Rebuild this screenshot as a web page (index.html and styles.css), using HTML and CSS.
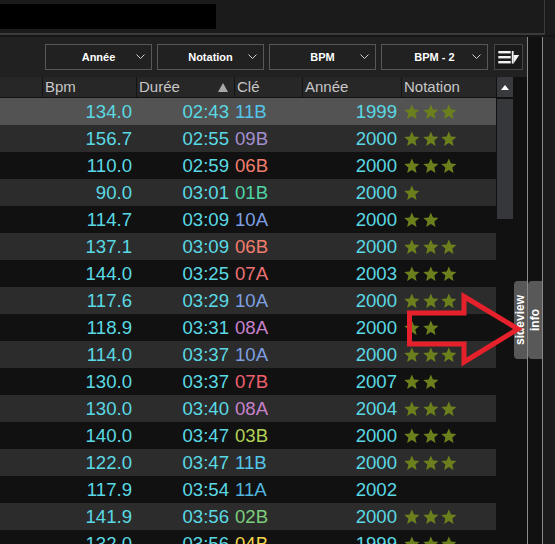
FILE: index.html
```html
<!DOCTYPE html>
<html lang="fr">
<head>
<meta charset="utf-8">
<title>Liste</title>
<link rel="stylesheet" href="styles.css">
</head>
<body>
<svg class="defs" width="0" height="0" aria-hidden="true">
  <defs>
    <symbol id="star" viewBox="0 0 24 24">
      <polygon points="12,0.6 15.3,8.3 23.6,9 17.3,14.5 19.2,22.8 12,18.5 4.8,22.8 6.7,14.5 0.4,9 8.7,8.3"/>
    </symbol>
    <symbol id="chev" viewBox="0 0 9 5">
      <polyline points="0.5,0.5 4.5,4.5 8.5,0.5" fill="none" stroke="#cfcfcf" stroke-width="1"/>
    </symbol>
  </defs>
</svg>

<div class="top"><div class="blackout"></div></div>
<div class="spacer"></div>

<div class="main">
  <div class="panel">
    <div class="toolbar">
      <div class="dd"><span class="dd-label">Année</span><svg class="chev"><use href="#chev"/></svg></div>
      <div class="dd"><span class="dd-label">Notation</span><svg class="chev"><use href="#chev"/></svg></div>
      <div class="dd"><span class="dd-label">BPM</span><svg class="chev"><use href="#chev"/></svg></div>
      <div class="dd"><span class="dd-label">BPM - 2</span><svg class="chev"><use href="#chev"/></svg></div>
      <div class="sortbtn">
        <svg width="27" height="24" viewBox="0 0 27 24">
          <rect x="3.3" y="6" width="12.4" height="2.4" fill="#f2f2f2"/>
          <rect x="3.3" y="11" width="12.4" height="2.4" fill="#f2f2f2"/>
          <rect x="3.3" y="16" width="12.4" height="2.4" fill="#f2f2f2"/>
          <rect x="16.8" y="6" width="1.8" height="12.6" fill="#f2f2f2"/>
          <polygon points="18.6,10 24.2,10 18.6,18.6" fill="#f2f2f2"/>
        </svg>
      </div>
    </div>

    <div class="tablewrap">
      <div class="table">
        <div class="thead">
          <div class="th"></div>
          <div class="th">Bpm</div>
          <div class="th sorted">Durée<span class="sortarrow"></span></div>
          <div class="th">Clé</div>
          <div class="th">Année</div>
          <div class="th">Notation</div>
        </div>

        <div class="row sel"><div></div><div class="num">134.0</div><div class="dur">02:43</div><div class="key k11b">11B</div><div class="yr">1999</div><div class="stars"><svg><use href="#star"/></svg><svg><use href="#star"/></svg><svg><use href="#star"/></svg></div></div>
        <div class="row alt"><div></div><div class="num">156.7</div><div class="dur">02:55</div><div class="key k09b">09B</div><div class="yr">2000</div><div class="stars"><svg><use href="#star"/></svg><svg><use href="#star"/></svg><svg><use href="#star"/></svg></div></div>
        <div class="row"><div></div><div class="num">110.0</div><div class="dur">02:59</div><div class="key k06b">06B</div><div class="yr">2000</div><div class="stars"><svg><use href="#star"/></svg><svg><use href="#star"/></svg><svg><use href="#star"/></svg></div></div>
        <div class="row alt"><div></div><div class="num">90.0</div><div class="dur">03:01</div><div class="key k01b">01B</div><div class="yr">2000</div><div class="stars"><svg><use href="#star"/></svg></div></div>
        <div class="row"><div></div><div class="num">114.7</div><div class="dur">03:09</div><div class="key k10a">10A</div><div class="yr">2000</div><div class="stars"><svg><use href="#star"/></svg><svg><use href="#star"/></svg></div></div>
        <div class="row alt"><div></div><div class="num">137.1</div><div class="dur">03:09</div><div class="key k06b">06B</div><div class="yr">2000</div><div class="stars"><svg><use href="#star"/></svg><svg><use href="#star"/></svg><svg><use href="#star"/></svg></div></div>
        <div class="row"><div></div><div class="num">144.0</div><div class="dur">03:25</div><div class="key k07a">07A</div><div class="yr">2003</div><div class="stars"><svg><use href="#star"/></svg><svg><use href="#star"/></svg><svg><use href="#star"/></svg></div></div>
        <div class="row alt"><div></div><div class="num">117.6</div><div class="dur">03:29</div><div class="key k10a">10A</div><div class="yr">2000</div><div class="stars"><svg><use href="#star"/></svg><svg><use href="#star"/></svg><svg><use href="#star"/></svg></div></div>
        <div class="row"><div></div><div class="num">118.9</div><div class="dur">03:31</div><div class="key k08a">08A</div><div class="yr">2000</div><div class="stars"><svg><use href="#star"/></svg><svg><use href="#star"/></svg></div></div>
        <div class="row alt"><div></div><div class="num">114.0</div><div class="dur">03:37</div><div class="key k10a">10A</div><div class="yr">2000</div><div class="stars"><svg><use href="#star"/></svg><svg><use href="#star"/></svg><svg><use href="#star"/></svg></div></div>
        <div class="row"><div></div><div class="num">130.0</div><div class="dur">03:37</div><div class="key k07b">07B</div><div class="yr">2007</div><div class="stars"><svg><use href="#star"/></svg><svg><use href="#star"/></svg></div></div>
        <div class="row alt"><div></div><div class="num">130.0</div><div class="dur">03:40</div><div class="key k08a">08A</div><div class="yr">2004</div><div class="stars"><svg><use href="#star"/></svg><svg><use href="#star"/></svg><svg><use href="#star"/></svg></div></div>
        <div class="row"><div></div><div class="num">140.0</div><div class="dur">03:47</div><div class="key k03b">03B</div><div class="yr">2000</div><div class="stars"><svg><use href="#star"/></svg><svg><use href="#star"/></svg><svg><use href="#star"/></svg></div></div>
        <div class="row alt"><div></div><div class="num">122.0</div><div class="dur">03:47</div><div class="key k11b">11B</div><div class="yr">2000</div><div class="stars"><svg><use href="#star"/></svg><svg><use href="#star"/></svg><svg><use href="#star"/></svg></div></div>
        <div class="row"><div></div><div class="num">117.9</div><div class="dur">03:54</div><div class="key k11a">11A</div><div class="yr">2002</div><div class="stars"></div></div>
        <div class="row alt"><div></div><div class="num">141.9</div><div class="dur">03:56</div><div class="key k02b">02B</div><div class="yr">2000</div><div class="stars"><svg><use href="#star"/></svg><svg><use href="#star"/></svg><svg><use href="#star"/></svg></div></div>
        <div class="row"><div></div><div class="num">132.0</div><div class="dur">03:56</div><div class="key k04b">04B</div><div class="yr">1999</div><div class="stars"><svg><use href="#star"/></svg><svg><use href="#star"/></svg><svg><use href="#star"/></svg></div></div>
      </div>

      <div class="vscroll">
        <div class="vs-up"><span class="vs-tri"></span></div>
        <div class="vs-thumb"></div>
      </div>
    </div>
  </div>
  <div class="rail"></div>
  <div class="rest"></div>
</div>

<div class="tab tab-side"><span>sideview</span></div>
<div class="tab tab-info"><span>info</span></div>

<svg class="arrow" width="555" height="544" viewBox="0 0 555 544" aria-hidden="true">
  <polygon points="409.5,313 464,313 464,296.5 518,329 464,362 464,344 409.5,344" fill="none" stroke="#e5222b" stroke-width="5" stroke-linejoin="miter"/>
</svg>
</body>
</html>
```

FILE: styles.css
```css
* { box-sizing: border-box; }

html, body {
  margin: 0;
  padding: 0;
}

body {
  width: 555px;
  height: 544px;
  overflow: hidden;
  background: #1b1b1b;
  font-family: "Liberation Sans", Arial, sans-serif;
  position: relative;
}

.defs { position: absolute; width: 0; height: 0; }

.top {
  width: 545px;
  height: 35px;
  background: #1b1b1b;
  border-right: 1px solid #3a3a3a;
  border-bottom: 2px solid #3a3a3a;
  padding-top: 4px;
}

.blackout {
  width: 216px;
  height: 25px;
  background: #000;
}

.spacer {
  height: 2px;
  background: #161616;
}

.main {
  display: flex;
  height: 507px;
}

.panel {
  width: 527px;
  background: #111;
  display: flex;
  flex-direction: column;
}

.toolbar {
  height: 40px;
  background: #212121;
  display: flex;
  align-items: flex-start;
  padding: 7px 0 0 45px;
  gap: 5px;
}

.dd {
  width: 107px;
  height: 26px;
  border: 1px solid #585858;
  display: grid;
  grid-template-columns: 1fr auto 1fr;
  align-items: center;
}

.dd-label {
  grid-column: 2;
  color: #fff;
  font-weight: bold;
  font-size: 11px;
}

.chev {
  grid-column: 3;
  justify-self: end;
  width: 9px;
  height: 5px;
  margin-right: 6px;
  margin-top: -2px;
}

.sortbtn {
  width: 29px;
  height: 26px;
  margin-left: 1px;
  border: 1px solid #474747;
  background: #1a1a1a;
}

.sortbtn svg { display: block; }

.tablewrap {
  display: flex;
  gap: 1px;
  flex: 1;
  overflow: hidden;
}

.table {
  width: 496px;
}

.thead,
.row {
  display: grid;
  grid-template-columns: 42px 94px 98px 68px 99px 95px;
}

.thead {
  height: 20px;
  margin-bottom: 1px;
}

.th {
  background: #272727;
  color: #c8c8c8;
  font-size: 15px;
  line-height: 20px;
  padding-left: 2px;
  white-space: nowrap;
}

.th + .th {
  border-left: 1px solid #141414;
}

.th.sorted {
  display: flex;
  justify-content: space-between;
  align-items: center;
  padding-right: 6px;
}

.sortarrow {
  width: 0;
  height: 0;
  border-left: 5.5px solid transparent;
  border-right: 5.5px solid transparent;
  border-bottom: 9px solid #a9a9a9;
}

.row {
  height: 27px;
  background: #111;
  font-size: 18.6px;
  line-height: 27px;
  white-space: nowrap;
}

.row.alt { background: #2c2c2c; }
.row.sel { background: #535353; }

.num, .dur, .yr {
  color: #5ad9e4;
  text-align: right;
}

.num { padding-right: 4px; }
.dur { padding-right: 5px; }
.yr { padding-right: 4px; }
.key { padding-left: 1px; }

.k11b { color: #55c5ea; }
.k09b { color: #a48fcf; }
.k06b { color: #f27d6d; }
.k01b { color: #4fd5a5; }
.k10a { color: #7d9fe0; }
.k07a { color: #ec7274; }
.k08a { color: #c782cc; }
.k07b { color: #ef5f6d; }
.k03b { color: #b4d254; }
.k11a { color: #52b6df; }
.k02b { color: #7ccf7b; }
.k04b { color: #f4d44c; }

.stars {
  display: flex;
  align-items: center;
  gap: 3px;
  padding-left: 3px;
  fill: #6b801d;
}

.stars svg {
  width: 15.7px;
  height: 15.7px;
  margin-top: 1px;
}

.vscroll {
  width: 16px;
  display: flex;
  flex-direction: column;
}

.vs-up {
  height: 20px;
  background: #393a3e;
  display: flex;
  align-items: center;
  justify-content: center;
}

.vs-tri {
  width: 0;
  height: 0;
  border-left: 4.5px solid transparent;
  border-right: 4.5px solid transparent;
  border-bottom: 5px solid #fff;
}

.vs-thumb {
  height: 120px;
  margin-top: 2px;
  background: #36373b;
}

.rail {
  width: 16px;
  background: #111;
  border-left: 1px solid #8a8a8a;
  border-right: 1px solid #8a8a8a;
}

.rest {
  flex: 1;
  background: #1b1b1b;
}

.tab {
  position: absolute;
  top: 281px;
  height: 78px;
  background: #585858;
  border-radius: 4px 0 0 4px;
  display: flex;
  align-items: center;
  justify-content: center;
  color: #fff;
  font-weight: bold;
  font-size: 12px;
}

.tab span {
  writing-mode: vertical-rl;
  transform: rotate(180deg);
  line-height: 13px;
}

.tab-side { left: 514px; width: 13px; }
.tab-info { left: 528px; width: 14px; }

.arrow {
  position: absolute;
  left: 0;
  top: 0;
  pointer-events: none;
}
```
